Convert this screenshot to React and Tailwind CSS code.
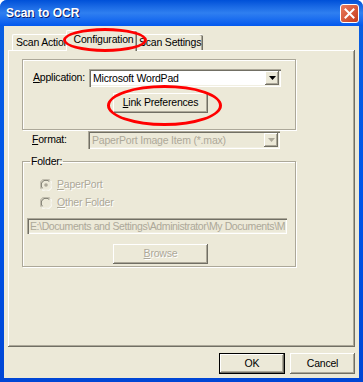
import React from 'react'

const raised = 'shadow-[inset_-1px_-1px_0_#716f64,inset_1px_1px_0_#ffffff,inset_-2px_-2px_0_#aca899]'
const sunken = 'shadow-[inset_1px_1px_0_#aca899,inset_2px_2px_0_#716f64,inset_-1px_-1px_0_#ffffff,inset_-2px_-2px_0_#f1efe2]'

function Radio({ checked }) {
  return (
    <svg width="12" height="12" viewBox="0 0 12 12" className="shrink-0">
      <circle cx="6" cy="6" r="5.5" fill="#ece9d8" />
      <path d="M1.6 10.4 A5.5 5.5 0 0 1 10.4 1.6" stroke="#aca899" fill="none" />
      <path d="M10.4 1.6 A5.5 5.5 0 0 1 1.6 10.4" stroke="#ffffff" fill="none" />
      <path d="M2.6 9.4 A4.5 4.5 0 0 1 9.4 2.6" stroke="#716f64" fill="none" />
      <path d="M9.4 2.6 A4.5 4.5 0 0 1 2.6 9.4" stroke="#f1efe2" fill="none" />
      {checked && <circle cx="6" cy="6" r="1.8" fill="#aca899" />}
    </svg>
  )
}

function Combo({ value, disabled }) {
  return (
    <div className={`flex items-stretch w-[192px] h-[18px] p-[2px] ${sunken} ${disabled ? 'bg-[#ece9d8]' : 'bg-white'}`}>
      <div className={`flex-1 px-[2px] leading-[14px] whitespace-nowrap overflow-hidden ${disabled ? 'text-[#aca899]' : 'text-black'}`}>
        {value}
      </div>
      <div className={`w-[14px] flex items-center justify-center bg-[#ece9d8] ${raised}`}>
        <svg width="7" height="4" viewBox="0 0 7 4">
          <path d="M0 0 H7 L3.5 4 Z" fill={disabled ? '#aca899' : '#000000'} />
        </svg>
      </div>
    </div>
  )
}

function Button({ children, isDefault, disabled, className = '' }) {
  return (
    <button
      className={`flex items-center justify-center bg-[#ece9d8] ${
        isDefault
          ? 'border border-black shadow-[inset_-1px_-1px_0_#716f64,inset_1px_1px_0_#ffffff,inset_-2px_-2px_0_#aca899]'
          : raised
      } ${disabled ? 'text-[#aca899] [text-shadow:1px_1px_0_#ffffff]' : 'text-black'} ${className}`}
    >
      {children}
    </button>
  )
}

export default function App() {
  return (
    <div
      className="w-[363px] h-[382px] bg-white overflow-hidden text-[10.5px] tracking-[-0.2px]"
      style={{ fontFamily: '"Liberation Sans", Arial, sans-serif' }}
    >
      <div className="relative w-full h-full flex flex-col rounded-t-[7px] bg-gradient-to-b from-[#0a5fe0] via-[#0055ea] to-[#0046d5]">
        {/* title bar */}
        <div className="h-[26px] shrink-0 flex items-center justify-between pl-[6px] pr-[4px] rounded-t-[7px] bg-gradient-to-b from-[#0050d8] via-[#2f7ff0] to-[#0258ee]">
          <span className="text-white font-bold text-[12px] tracking-normal [text-shadow:1px_1px_0_#0a1e6e]">Scan to OCR</span>
          <div className="w-[19px] h-[19px] rounded-[3px] border border-white bg-gradient-to-br from-[#e97a5c] to-[#c53a1a] flex items-center justify-center">
            <svg width="11" height="11" viewBox="0 0 11 11">
              <path d="M1.5 1.5 L9.5 9.5 M9.5 1.5 L1.5 9.5" stroke="#ffffff" strokeWidth="2" strokeLinecap="square" />
            </svg>
          </div>
        </div>

        {/* body */}
        <div className="flex-1 mx-[4px] mb-[4px] bg-[#ece9d8] flex flex-col px-[4px] pt-[4px]">
          {/* tabs */}
          <div className="flex items-end h-[20px] pl-[4px]">
            <div className="w-[56px] h-[16px] rounded-t-[2px] border-t border-l border-white pl-[3px] leading-[15px] whitespace-nowrap overflow-hidden">
              Scan Action
            </div>
            <div className="relative z-10 -mx-[2px] w-[71px] h-[21px] -mb-[1px] rounded-t-[2px] bg-[#ece9d8] border-t border-l border-white shadow-[inset_-1px_0_0_#716f64,inset_-2px_0_0_#aca899] flex items-center justify-center pb-[3px] pl-[3px]">
              Configuration
            </div>
            <div className="w-[68px] h-[16px] rounded-t-[2px] border-t border-white shadow-[inset_-1px_0_0_#716f64,inset_-2px_0_0_#aca899] pl-[4px] leading-[15px] whitespace-nowrap">
              Scan Settings
            </div>
          </div>

          {/* panel */}
          <div className={`h-[297px] ${raised} bg-[#ece9d8] pl-[14px] pt-[9px]`}>
            <div className="w-[274px] h-[71px] border border-[#aca899] shadow-[inset_1px_1px_0_#ffffff,1px_1px_0_#ffffff] pl-[10px] pt-[9px]">
              <div className="flex items-center h-[18px]">
                <span className="w-[56px]">
                  <span className="underline">A</span>pplication:
                </span>
                <Combo value="Microsoft WordPad" />
              </div>
              <Button className="ml-[80px] mt-[6px] w-[95px] h-[20px]">
                <span>
                  <span className="underline">L</span>ink Preferences
                </span>
              </Button>
            </div>

            <div className="flex items-center h-[17px] mt-[1px] pl-[10px]">
              <span className="w-[56px]">
                <span className="underline">F</span>ormat:
              </span>
              <Combo value="PaperPort Image Item (*.max)" disabled />
            </div>

            <fieldset className="mt-[7px] w-[274px] h-[112px] border border-[#aca899] shadow-[inset_1px_1px_0_#ffffff,1px_1px_0_#ffffff] px-[4px]">
              <legend className="ml-[3px] px-[1px] leading-[12px]">Folder:</legend>
              <div className="flex items-center gap-[5px] ml-[13px] mt-[11px] h-[13px] text-[#aca899] [text-shadow:1px_1px_0_#ffffff]">
                <Radio checked />
                <span>
                  <span className="underline">P</span>aperPort
                </span>
              </div>
              <div className="flex items-center gap-[5px] ml-[13px] mt-[5px] h-[13px] text-[#aca899] [text-shadow:1px_1px_0_#ffffff]">
                <Radio />
                <span>
                  <span className="underline">O</span>ther Folder
                </span>
              </div>
              <div className={`mt-[9px] w-[260px] h-[16px] px-[3px] leading-[16px] whitespace-nowrap overflow-hidden text-[#aca899] tracking-[-0.4px] ${sunken}`}>
                E:\Documents and Settings\Administrator\My Documents\M
              </div>
              <Button disabled className="ml-[86px] mt-[10px] w-[95px] h-[20px]">
                <span>
                  <span className="underline">B</span>rowse
                </span>
              </Button>
            </fieldset>
          </div>

          {/* bottom buttons */}
          <div className="flex justify-end gap-[5px] mt-[6px]">
            <Button isDefault className="w-[66px] h-[21px]">OK</Button>
            <Button className="w-[65px] h-[21px]">Cancel</Button>
          </div>
        </div>

        {/* red ellipses */}
        <div className="absolute left-[63px] top-[28px] w-[84px] h-[24px] rounded-[50%] border-[3px] border-[#ff0000] z-20 pointer-events-none" />
        <div className="absolute left-[107px] top-[85px] w-[115px] h-[41px] rounded-[50%] border-[3px] border-[#ff0000] z-20 pointer-events-none" />
      </div>
    </div>
  )
}
